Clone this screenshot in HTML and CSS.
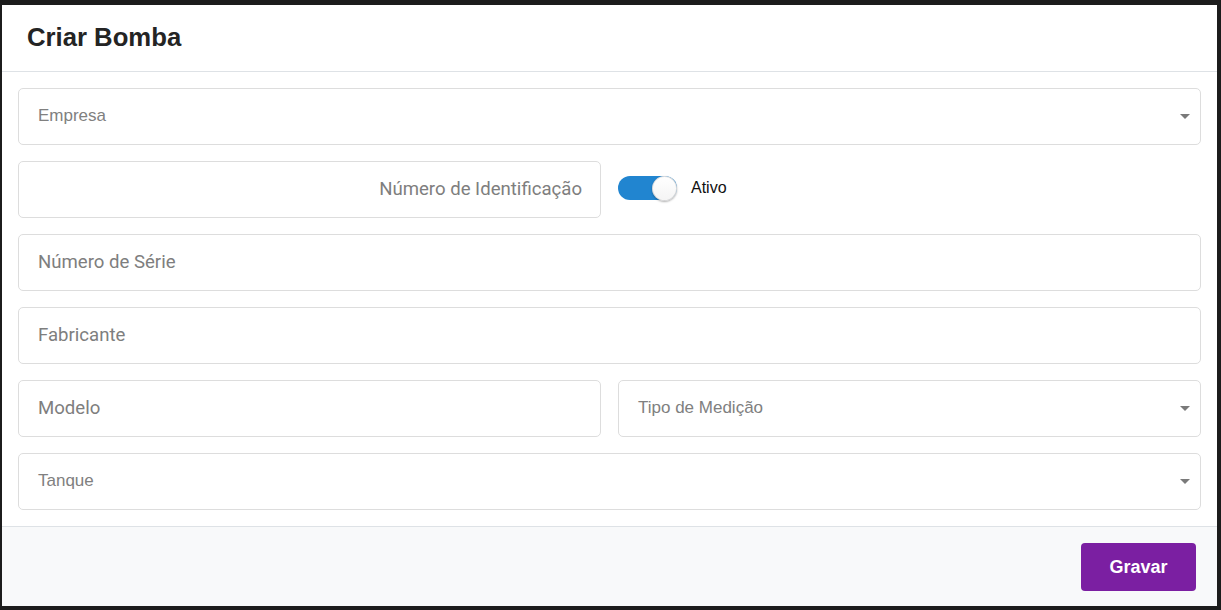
FILE: index.html
```html
<!DOCTYPE html>
<html lang="pt">
<head>
<meta charset="utf-8">
<title>Criar Bomba</title>
<link rel="stylesheet" href="styles.css">
</head>
<body>
<div class="modal">
  <div class="modal-header">
    <h1 class="modal-title">Criar Bomba</h1>
  </div>
  <div class="modal-body">
    <div class="field select"><span class="select-text">Empresa</span><span class="caret"></span></div>
    <div class="row">
      <div class="field input right"><span class="input-text">Número de Identificação</span></div>
      <div class="toggle-wrap">
        <div class="toggle"><div class="knob"></div></div>
        <span class="toggle-label">Ativo</span>
      </div>
    </div>
    <div class="field input"><span class="input-text">Número de Série</span></div>
    <div class="field input"><span class="input-text">Fabricante</span></div>
    <div class="row">
      <div class="field input"><span class="input-text">Modelo</span></div>
      <div class="field select"><span class="select-text">Tipo de Medição</span><span class="caret"></span></div>
    </div>
    <div class="field select"><span class="select-text">Tanque</span><span class="caret"></span></div>
  </div>
  <div class="modal-footer">
    <button class="btn">Gravar</button>
  </div>
</div>
</body>
</html>
```
FILE: styles.css
```css
* { box-sizing: border-box; }
html, body { margin: 0; padding: 0; }
body {
  background: #1c1c1c;
  width: 1221px;
  height: 610px;
  padding: 5px 4px 4px 2px;
  overflow: hidden;
  font-family: "Liberation Sans", Arial, sans-serif;
}
.modal {
  width: 1215px;
  height: 601px;
  background: #fff;
  display: flex;
  flex-direction: column;
}
.modal-header {
  height: 67px;
  border-bottom: 1px solid #dee2e6;
  display: flex;
  align-items: center;
  padding-left: 25px;
}
.modal-title {
  margin: 0;
  font-size: 25.7px;
  font-weight: bold;
  color: #242424;
  line-height: 1;
}
.modal-body {
  padding: 16px;
  display: flex;
  flex-direction: column;
  gap: 16px;
  height: 454px;
}
.row {
  display: grid;
  grid-template-columns: 583px 583px;
  column-gap: 17px;
}
.field {
  height: 57px;
  border: 1px solid #dddddd;
  border-radius: 5px;
  display: flex;
  align-items: center;
  padding: 0 19px;
  position: relative;
}
.field.right { justify-content: flex-end; padding-right: 18px; }
.input-text {
  font-family: Roboto, "Liberation Sans", sans-serif;
  font-size: 18.6px;
  color: #7e7e7e;
  margin-top: -1px;
}
.select-text {
  font-size: 17px;
  color: #808080;
  margin-top: -2px;
}
.caret {
  position: absolute;
  right: 10px;
  top: 50%;
  margin-top: -3px;
  width: 0;
  height: 0;
  border-left: 5px solid transparent;
  border-right: 5px solid transparent;
  border-top: 5px solid #7a7a7a;
}
.toggle-wrap {
  display: flex;
  align-items: center;
  gap: 14px;
  margin-top: -3px;
}
.toggle {
  width: 59px;
  height: 24px;
  border-radius: 12px;
  background: #2185d0;
  display: flex;
  justify-content: flex-end;
  align-items: center;
}
.knob {
  width: 25px;
  height: 25px;
  border-radius: 50%;
  background: linear-gradient(#ffffff, #f4f4f4);
  box-shadow: 0 1px 2px rgba(0,0,0,0.3), inset 0 0 0 1px rgba(34,36,38,0.15);
}
.toggle-label {
  font-size: 16px;
  color: #111;
}
.modal-footer {
  flex: 1;
  background: #f8f9fa;
  border-top: 1px solid #dee2e6;
  display: flex;
  justify-content: flex-end;
  align-items: flex-start;
  padding: 16px 21px 0 0;
}
.btn {
  width: 115px;
  height: 48px;
  border: none;
  border-radius: 4px;
  background: #7b1fa2;
  color: #fff;
  font-family: "Liberation Sans", Arial, sans-serif;
  font-size: 18px;
  font-weight: bold;
  padding: 0;
}
```
